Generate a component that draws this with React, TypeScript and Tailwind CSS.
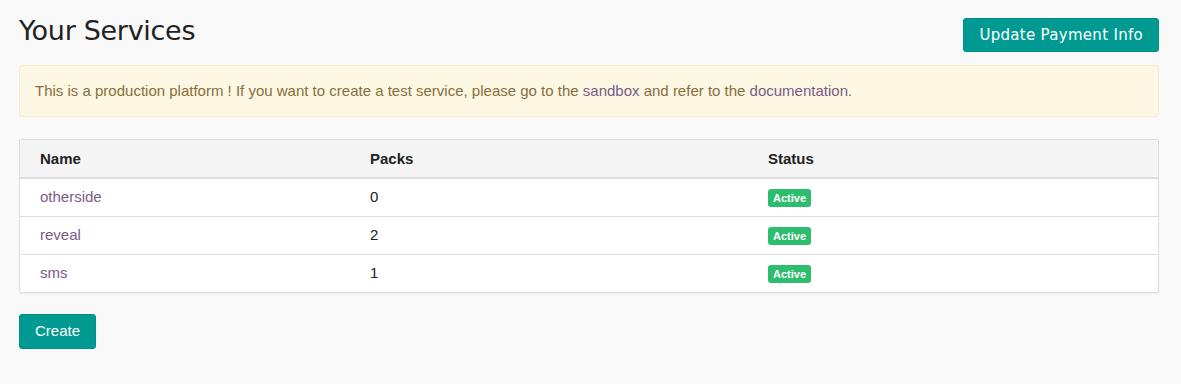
import React from "react";

const services = [
  { name: "otherside", packs: 0 },
  { name: "reveal", packs: 2 },
  { name: "sms", packs: 1 },
];

export default function App() {
  return (
    <div className="min-h-[384px] bg-[#f9f9f9] pl-[19px] pr-[22px] pt-[14px] pb-8 font-['Liberation_Sans',Arial,sans-serif] text-[15px] text-[#333]">
      <div className="flex items-start justify-between">
        <h1 className="mt-[1px] font-['DejaVu_Sans',sans-serif] text-[27px] leading-[32px] tracking-[-0.3px] text-[#222]">
          Your Services
        </h1>
        <button className="mt-[4px] h-[34px] rounded-[3px] border border-[#008f86] bg-[#009a92] px-[15px] font-['DejaVu_Sans',sans-serif] text-[15px] tracking-[0.3px] text-white">
          Update Payment Info
        </button>
      </div>

      <div className="mt-[13px] rounded-[3px] border border-[#faebcc] bg-[#fcf8e3] px-[15px] py-[15px] leading-[20px] text-[#8a6d3b]">
        This is a production platform ! If you want to create a test service, please go to the{" "}
        <a className="text-[#7b5a86]">sandbox</a> and refer to the{" "}
        <a className="text-[#7b5a86]">documentation</a>.
      </div>

      <div className="mt-[22px] rounded-[2px] border border-[#ddd] bg-white shadow-[0_1px_1px_rgba(0,0,0,0.05)]">
        <table className="w-full border-collapse">
          <thead>
            <tr className="bg-[#f5f5f5]">
              <th className="w-[330px] border-b-2 border-[#ddd] px-[20px] py-[10px] text-left font-bold text-[#222] leading-[17px]">Name</th>
              <th className="w-[398px] border-b-2 border-[#ddd] px-[20px] py-[10px] text-left font-bold text-[#222] leading-[17px]">Packs</th>
              <th className="border-b-2 border-[#ddd] px-[20px] py-[10px] text-left font-bold text-[#222] leading-[17px]">Status</th>
            </tr>
          </thead>
          <tbody>
            {services.map((s, i) => (
              <tr key={s.name} className={i < services.length - 1 ? "border-b border-[#ddd]" : ""}>
                <td className="h-[38px] px-[20px] text-[#7b5a86]">{s.name}</td>
                <td className="h-[38px] px-[20px] text-[#222]">{s.packs}</td>
                <td className="h-[38px] px-[20px]">
                  <span className="inline-block rounded-[3px] bg-[#2ebd6e] px-[5px] py-[2px] text-[11px] font-bold leading-[14px] text-white">
                    Active
                  </span>
                </td>
              </tr>
            ))}
          </tbody>
        </table>
      </div>

      <button className="mt-[21px] h-[35px] rounded-[3px] border border-[#008f86] bg-[#009a92] px-[15px] text-[15px] text-white">
        Create
      </button>
    </div>
  );
}
